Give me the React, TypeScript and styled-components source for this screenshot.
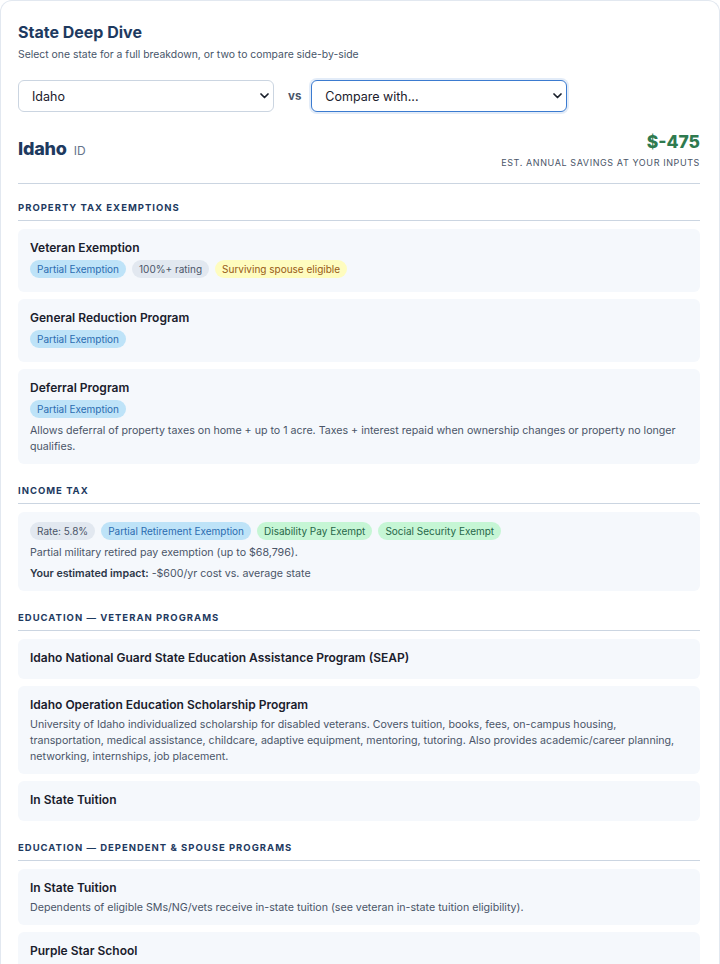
import { createGlobalStyle, styled } from 'styled-components'

const GlobalStyle = createGlobalStyle`
  body {
    margin: 0;
    background: #ffffff;
    font-family: Inter, "Noto Sans", sans-serif;
    color: #1a202c;
  }
`

const Panel = styled.div`
  box-sizing: border-box;
  width: 720px;
  min-height: 964px;
  border: 1px solid #e2e8f0;
  border-bottom: none;
  border-radius: 12px 12px 0 0;
  padding: 20px 19px 0 17px;
`

const Title = styled.h2`
  margin: 0;
  font-size: 16px;
  line-height: 22px;
  font-weight: 700;
  color: #1e3a5f;
`

const Subtitle = styled.p`
  margin: 4px 0 0;
  font-size: 10.4px;
  line-height: 16px;
  color: #475569;
`

const Controls = styled.div`
  display: flex;
  align-items: center;
  margin-top: 17px;
`

const SelectWrap = styled.div`
  position: relative;
  width: 256px;
`

const Select = styled.select<{ $focused?: boolean }>`
  appearance: none;
  box-sizing: border-box;
  width: 100%;
  height: 32px;
  padding: 0 28px 0 13px;
  border: 1px solid ${(p) => (p.$focused ? '#3b7bd0' : '#cbd5e1')};
  border-radius: 6px;
  background: #ffffff;
  box-shadow: ${(p) => (p.$focused ? '0 0 0 2px rgba(59, 123, 208, 0.14)' : 'none')};
  font-family: Inter, "Noto Sans", sans-serif;
  font-size: 12.5px;
  color: #1a202c;
  outline: none;
`

const Chevron = styled.svg`
  position: absolute;
  right: 5px;
  top: 13px;
  width: 9px;
  height: 6px;
  pointer-events: none;
`

const Vs = styled.span`
  padding: 0 10px 0 14px;
  font-size: 11.5px;
  font-weight: 700;
  color: #4a5568;
`

const StateHeader = styled.div`
  display: flex;
  align-items: center;
  justify-content: space-between;
  margin-top: 19px;
  padding-bottom: 14px;
  border-bottom: 1px solid #cbd5e1;
`

const StateName = styled.h3`
  margin: 0;
  font-size: 18px;
  line-height: 24px;
  font-weight: 800;
  color: #1e3a5f;
  letter-spacing: -0.2px;
`

const StateCode = styled.span`
  margin-left: 7px;
  font-size: 12px;
  font-weight: 400;
  color: #64748b;
  letter-spacing: 0;
`

const Savings = styled.div`
  text-align: right;
`

const SavingsValue = styled.div`
  font-size: 17.5px;
  line-height: 22px;
  font-weight: 800;
  color: #2f7a4f;
`

const SavingsLabel = styled.div`
  margin-top: 4px;
  font-size: 9px;
  line-height: 12px;
  letter-spacing: 0.6px;
  text-transform: uppercase;
  color: #4a5568;
`

const Sections = styled.div`
  display: flex;
  flex-direction: column;
  gap: 20px;
  padding-top: 17px;
`

const SectionHeading = styled.h4`
  margin: 0 0 8px;
  padding-bottom: 6px;
  border-bottom: 1px solid #cbd5e1;
  font-size: 9.5px;
  line-height: 13px;
  font-weight: 700;
  letter-spacing: 1px;
  text-transform: uppercase;
  color: #1e3a5f;
`

const CardList = styled.div`
  display: flex;
  flex-direction: column;
  gap: 7px;
`

const Card = styled.div`
  padding: 10px 12px 9px;
  border-radius: 6px;
  background: #f5f8fc;
`

const CardTitle = styled.div`
  margin-bottom: 3px;
  font-size: 12px;
  line-height: 18px;
  font-weight: 600;
  color: #1a202c;
`

const Badges = styled.div`
  display: flex;
  flex-wrap: wrap;
  gap: 6px;
  margin-bottom: 5px;
`

type Tone = 'blue' | 'gray' | 'yellow' | 'green'

const tones: Record<Tone, { bg: string; fg: string }> = {
  blue: { bg: '#bee3f8', fg: '#2b6cb0' },
  gray: { bg: '#e2e8f0', fg: '#4a5568' },
  yellow: { bg: '#fefcbf', fg: '#975a16' },
  green: { bg: '#c6f6d5', fg: '#276749' },
}

const Badge = styled.span<{ $tone: Tone }>`
  display: inline-flex;
  align-items: center;
  height: 18px;
  padding: 0 7px;
  border-radius: 9px;
  background: ${(p) => tones[p.$tone].bg};
  color: ${(p) => tones[p.$tone].fg};
  font-size: 10px;
  white-space: nowrap;
`

const Description = styled.p`
  margin: 1px 0 0;
  font-size: 10.65px;
  line-height: 16px;
  color: #4a5568;
`

const Impact = styled.p`
  margin: 5px 0 0;
  font-size: 10.65px;
  line-height: 16px;
  color: #4a5568;

  strong {
    font-weight: 600;
    color: #2d3748;
  }
`

interface Program {
  title: string
  badges?: { label: string; tone: Tone }[]
  description?: string
}

const propertyTax: Program[] = [
  {
    title: 'Veteran Exemption',
    badges: [
      { label: 'Partial Exemption', tone: 'blue' },
      { label: '100%+ rating', tone: 'gray' },
      { label: 'Surviving spouse eligible', tone: 'yellow' },
    ],
  },
  {
    title: 'General Reduction Program',
    badges: [{ label: 'Partial Exemption', tone: 'blue' }],
  },
  {
    title: 'Deferral Program',
    badges: [{ label: 'Partial Exemption', tone: 'blue' }],
    description:
      'Allows deferral of property taxes on home + up to 1 acre. Taxes + interest repaid when ownership changes or property no longer qualifies.',
  },
]

const veteranEducation: Program[] = [
  { title: 'Idaho National Guard State Education Assistance Program (SEAP)' },
  {
    title: 'Idaho Operation Education Scholarship Program',
    description:
      'University of Idaho individualized scholarship for disabled veterans. Covers tuition, books, fees, on-campus housing, transportation, medical assistance, childcare, adaptive equipment, mentoring, tutoring. Also provides academic/career planning, networking, internships, job placement.',
  },
  { title: 'In State Tuition' },
]

const dependentEducation: Program[] = [
  {
    title: 'In State Tuition',
    description:
      'Dependents of eligible SMs/NG/vets receive in-state tuition (see veteran in-state tuition eligibility).',
  },
  { title: 'Purple Star School' },
]

const incomeBadges: { label: string; tone: Tone }[] = [
  { label: 'Rate: 5.8%', tone: 'gray' },
  { label: 'Partial Retirement Exemption', tone: 'blue' },
  { label: 'Disability Pay Exempt', tone: 'green' },
  { label: 'Social Security Exempt', tone: 'green' },
]

function ProgramCard({ program }: { program: Program }) {
  return (
    <Card>
      <CardTitle>{program.title}</CardTitle>
      {program.badges && (
        <Badges>
          {program.badges.map((b) => (
            <Badge key={b.label} $tone={b.tone}>
              {b.label}
            </Badge>
          ))}
        </Badges>
      )}
      {program.description && <Description>{program.description}</Description>}
    </Card>
  )
}

function StateSelect({ value, options, focused }: { value: string; options: string[]; focused?: boolean }) {
  return (
    <SelectWrap>
      <Select $focused={focused} defaultValue={value}>
        {options.map((o) => (
          <option key={o}>{o}</option>
        ))}
      </Select>
      <Chevron viewBox="0 0 9 6" fill="none">
        <path d="M1 1l3.5 3.5L8 1" stroke="#1a202c" strokeWidth="1.7" strokeLinecap="round" strokeLinejoin="round" />
      </Chevron>
    </SelectWrap>
  )
}

function ProgramSection({ heading, programs }: { heading: string; programs: Program[] }) {
  return (
    <section>
      <SectionHeading>{heading}</SectionHeading>
      <CardList>
        {programs.map((p) => (
          <ProgramCard key={p.title} program={p} />
        ))}
      </CardList>
    </section>
  )
}

export default function App() {
  return (
    <>
      <GlobalStyle />
      <Panel>
        <Title>State Deep Dive</Title>
        <Subtitle>Select one state for a full breakdown, or two to compare side-by-side</Subtitle>
        <Controls>
          <StateSelect value="Idaho" options={['Idaho', 'Iowa', 'Montana', 'Oregon']} />
          <Vs>vs</Vs>
          <StateSelect value="Compare with..." options={['Compare with...', 'Montana', 'Oregon']} focused />
        </Controls>

        <StateHeader>
          <StateName>
            Idaho<StateCode>ID</StateCode>
          </StateName>
          <Savings>
            <SavingsValue>$-475</SavingsValue>
            <SavingsLabel>Est. annual savings at your inputs</SavingsLabel>
          </Savings>
        </StateHeader>

        <Sections>
          <ProgramSection heading="Property Tax Exemptions" programs={propertyTax} />

          <section>
            <SectionHeading>Income Tax</SectionHeading>
            <Card>
              <Badges>
                {incomeBadges.map((b) => (
                  <Badge key={b.label} $tone={b.tone}>
                    {b.label}
                  </Badge>
                ))}
              </Badges>
              <Description>Partial military retired pay exemption (up to $68,796).</Description>
              <Impact>
                <strong>Your estimated impact:</strong> -$600/yr cost vs. average state
              </Impact>
            </Card>
          </section>

          <ProgramSection heading="Education — Veteran Programs" programs={veteranEducation} />
          <ProgramSection heading="Education — Dependent & Spouse Programs" programs={dependentEducation} />
        </Sections>
      </Panel>
    </>
  )
}
